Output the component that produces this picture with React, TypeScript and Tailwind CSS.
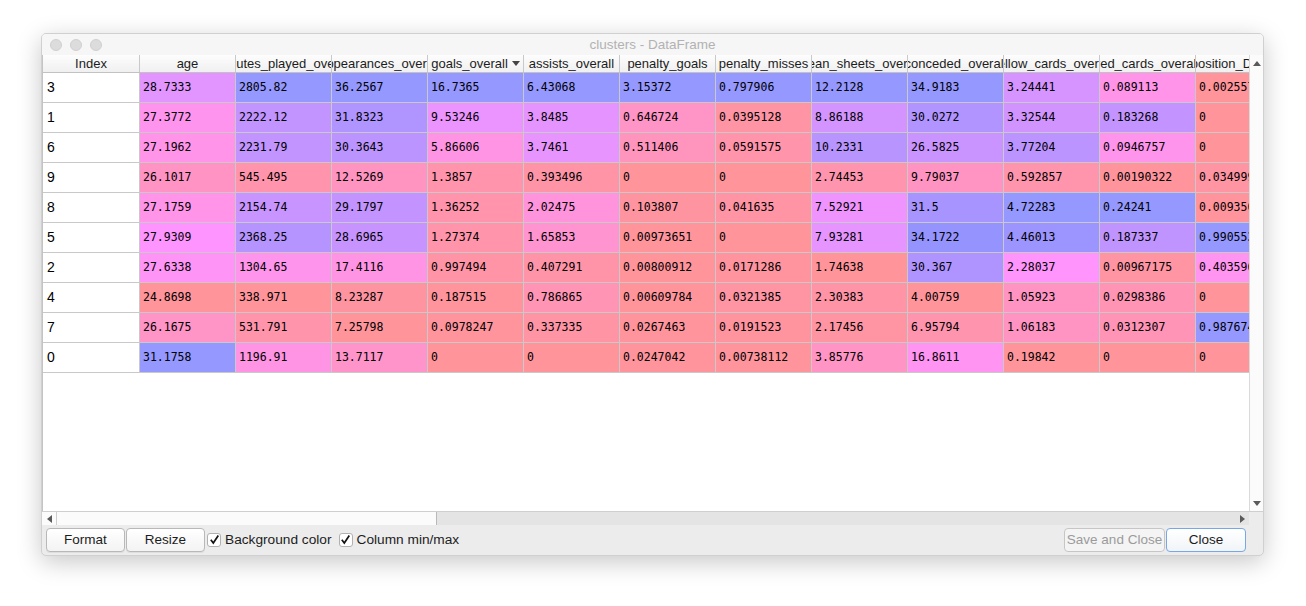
import React from "react";

// Spyder-style DataFrame viewer: numeric cells coloured per column (min/max)
const COLUMNS = [
  "age",
  "minutes_played_overall",
  "appearances_overall",
  "goals_overall",
  "assists_overall",
  "penalty_goals",
  "penalty_misses",
  "clean_sheets_overall",
  "conceded_overall",
  "yellow_cards_overall",
  "red_cards_overall",
  "position_Defender",
];

const ROWS: { index: string; values: string[] }[] = [
  { index: "3", values: ["28.7333", "2805.82", "36.2567", "16.7365", "6.43068", "3.15372", "0.797906", "12.2128", "34.9183", "3.24441", "0.089113", "0.00255754"] },
  { index: "1", values: ["27.3772", "2222.12", "31.8323", "9.53246", "3.8485", "0.646724", "0.0395128", "8.86188", "30.0272", "3.32544", "0.183268", "0"] },
  { index: "6", values: ["27.1962", "2231.79", "30.3643", "5.86606", "3.7461", "0.511406", "0.0591575", "10.2331", "26.5825", "3.77204", "0.0946757", "0"] },
  { index: "9", values: ["26.1017", "545.495", "12.5269", "1.3857", "0.393496", "0", "0", "2.74453", "9.79037", "0.592857", "0.00190322", "0.0349993"] },
  { index: "8", values: ["27.1759", "2154.74", "29.1797", "1.36252", "2.02475", "0.103807", "0.041635", "7.52921", "31.5", "4.72283", "0.24241", "0.00935047"] },
  { index: "5", values: ["27.9309", "2368.25", "28.6965", "1.27374", "1.65853", "0.00973651", "0", "7.93281", "34.1722", "4.46013", "0.187337", "0.990553"] },
  { index: "2", values: ["27.6338", "1304.65", "17.4116", "0.997494", "0.407291", "0.00800912", "0.0171286", "1.74638", "30.367", "2.28037", "0.00967175", "0.403596"] },
  { index: "4", values: ["24.8698", "338.971", "8.23287", "0.187515", "0.786865", "0.00609784", "0.0321385", "2.30383", "4.00759", "1.05923", "0.0298386", "0"] },
  { index: "7", values: ["26.1675", "531.791", "7.25798", "0.0978247", "0.337335", "0.0267463", "0.0191523", "2.17456", "6.95794", "1.06183", "0.0312307", "0.987674"] },
  { index: "0", values: ["31.1758", "1196.91", "13.7117", "0", "0", "0.0247042", "0.00738112", "3.85776", "16.8611", "0.19842", "0", "0"] },
];

const MIN_HUE = 0.66;
const HUE_RANGE = 0.33;
const SAT = 0.7;
const ALPHA = 0.6;

function hsvToRgb(h: number, s: number, v: number) {
  const i = Math.floor(h * 6);
  const f = h * 6 - i;
  const p = v * (1 - s);
  const q = v * (1 - f * s);
  const t = v * (1 - (1 - f) * s);
  const m = [
    [v, t, p],
    [q, v, p],
    [p, v, t],
    [p, q, v],
    [t, p, v],
    [v, p, q],
  ][i % 6];
  return m.map((c) => c * 255);
}

function cellColor(value: number, min: number, max: number) {
  const hue = max === min ? MIN_HUE : MIN_HUE + (HUE_RANGE * (max - value)) / (max - min);
  const rgb = hsvToRgb(hue, SAT, 1).map((c) => Math.round(255 * (1 - ALPHA) + c * ALPHA));
  return `rgb(${rgb[0]}, ${rgb[1]}, ${rgb[2]})`;
}

const ranges = COLUMNS.map((_, ci) => {
  const nums = ROWS.map((r) => parseFloat(r.values[ci]));
  return { min: Math.min(...nums), max: Math.max(...nums) };
});

function Arrow({ dir }: { dir: "up" | "down" | "left" | "right" }) {
  const pts = {
    up: "0,6 8,6 4,1",
    down: "0,1 8,1 4,6",
    left: "6,0 6,8 1,4",
    right: "1,0 1,8 6,4",
  }[dir];
  const vertical = dir === "up" || dir === "down";
  return (
    <svg width={vertical ? 8 : 7} height={vertical ? 7 : 8} viewBox={vertical ? "0 0 8 7" : "0 0 7 8"}>
      <polygon points={pts} fill="#5a5a5a" />
    </svg>
  );
}

function HeaderCell({ name, sorted, wide }: { name: string; sorted?: boolean; wide?: boolean }) {
  return (
    <div
      className={`${wide ? "w-[97px]" : "w-[96px]"} shrink-0 h-full border-r border-[#c9c9c9] flex items-center justify-center gap-[4px] overflow-hidden whitespace-nowrap text-[13px] text-[#1c1c1c]`}
    >
      <span className="shrink-0">{name}</span>
      {sorted && (
        <svg width="8" height="5" viewBox="0 0 8 5" className="shrink-0">
          <polygon points="0,0 8,0 4,5" fill="#444" />
        </svg>
      )}
    </div>
  );
}

function Checkbox({ label }: { label: string }) {
  return (
    <div className="flex items-center gap-[4px]">
      <div className="w-[14px] h-[14px] rounded-[3px] border border-[#b1b1b1] bg-white flex items-center justify-center">
        <svg width="11" height="11" viewBox="0 0 11 11">
          <path d="M1.8 5.8 L4.3 9 L9.3 1.5" stroke="#111" strokeWidth="1.7" fill="none" />
        </svg>
      </div>
      <span className="text-[13.7px] text-[#1c1c1c]">{label}</span>
    </div>
  );
}

export default function App() {
  return (
    <div className="w-[1306px] h-[606px] bg-white pl-[41px] pt-[33px] font-['Liberation_Sans',Arial,sans-serif]">
      <div className="w-[1223px] h-[523px] flex flex-col rounded-[5px] bg-[#ececec] border border-[#d0d0d0] overflow-hidden shadow-[0_6px_24px_rgba(0,0,0,0.22)]">
        {/* Barra de título */}
        <div className="h-[21px] shrink-0 grid grid-cols-[1fr_auto_1fr] items-center pt-[1px] bg-[#f6f6f6]">
          <div className="flex items-center gap-[8px] pl-[8px]">
            <div className="w-[12px] h-[12px] rounded-full bg-[#dcdcdc] border border-[#d0d0d0]" />
            <div className="w-[12px] h-[12px] rounded-full bg-[#dcdcdc] border border-[#d0d0d0]" />
            <div className="w-[12px] h-[12px] rounded-full bg-[#dcdcdc] border border-[#d0d0d0]" />
          </div>
          <span className="text-[13.5px] text-[#b2b2b2]">clusters - DataFrame</span>
          <div />
        </div>

        {/* Tabela */}
        <div className="h-[470px] shrink-0 flex flex-col bg-white">
          <div className="flex-1 flex min-h-0">
            <div className="flex-1 min-w-0 overflow-hidden border-l border-[#c4c4c4] flex flex-col">
              <div className="h-[18px] shrink-0 flex border-b border-[#c2c2c2] bg-linear-to-b from-[#fdfdfd] to-[#f0f0f0]">
                <HeaderCell name="Index" wide />
                {COLUMNS.map((c) => (
                  <HeaderCell key={c} name={c} sorted={c === "goals_overall"} />
                ))}
              </div>
              {ROWS.map((row) => (
                <div key={row.index} className="h-[30px] shrink-0 flex">
                  <div className="w-[97px] shrink-0 h-full border-r border-b border-[#c9c9c9] flex items-center pl-[4px] text-[14px] text-black bg-white">
                    {row.index}
                  </div>
                  {row.values.map((v, ci) => (
                    <div
                      key={ci}
                      className="w-[96px] shrink-0 h-full border-r border-b border-[#c9c9c9] flex items-center pl-[3px] overflow-hidden whitespace-nowrap font-['DejaVu_Sans_Mono',monospace] text-[11.5px] text-black"
                      style={{ backgroundColor: cellColor(parseFloat(v), ranges[ci].min, ranges[ci].max) }}
                    >
                      {v}
                    </div>
                  ))}
                </div>
              ))}
            </div>
            {/* Barra de rolagem vertical */}
            <div className="w-[14px] shrink-0 flex flex-col border-l border-[#dadada] bg-[#fbfbfb]">
              <div className="h-[16px] flex items-center justify-center">
                <Arrow dir="up" />
              </div>
              <div className="flex-1" />
              <div className="h-[16px] flex items-center justify-center">
                <Arrow dir="down" />
              </div>
            </div>
          </div>
          {/* Barra de rolagem horizontal */}
          <div className="h-[14px] shrink-0 flex border-t border-[#cfcfcf]">
            <div className="w-[15px] shrink-0 flex items-center justify-center border-r border-[#cfcfcf] bg-[#fbfbfb]">
              <Arrow dir="left" />
            </div>
            <div className="w-[380px] shrink-0 bg-[#fbfbfb] border-r border-[#b9b9b9]" />
            <div className="flex-1 bg-[#e4e4e4]" />
            <div className="w-[14px] shrink-0 flex items-center justify-center bg-[#e4e4e4]">
              <Arrow dir="right" />
            </div>
            <div className="w-[14px] shrink-0 bg-[#ececec]" />
          </div>
        </div>

        {/* Rodapé */}
        <div className="flex-1 flex items-center pl-[4px] pr-[17px]">
          <button className="w-[79px] h-[24px] rounded-[4px] border border-[#b8b8b8] bg-linear-to-b from-white to-[#f3f3f3] text-[13.5px] text-[#1c1c1c] shadow-[0_1px_0_rgba(0,0,0,0.06)]">
            Format
          </button>
          <button className="ml-[1px] w-[79px] h-[24px] rounded-[4px] border border-[#b8b8b8] bg-linear-to-b from-white to-[#f3f3f3] text-[13.5px] text-[#1c1c1c] shadow-[0_1px_0_rgba(0,0,0,0.06)]">
            Resize
          </button>
          <div className="ml-[2px] flex items-center gap-[7px]">
            <Checkbox label="Background color" />
            <Checkbox label="Column min/max" />
          </div>
          <div className="flex-1" />
          <button className="w-[101px] h-[24px] rounded-[4px] border border-[#c6c6c6] bg-[#f4f4f4] text-[13.5px] text-[#9b9b9b]">
            Save and Close
          </button>
          <button className="ml-[1px] w-[80px] h-[24px] rounded-[4px] border border-[#79a7e3] bg-linear-to-b from-white to-[#f1f4f8] text-[13.5px] text-[#1c1c1c]">
            Close
          </button>
        </div>
      </div>
    </div>
  );
}
